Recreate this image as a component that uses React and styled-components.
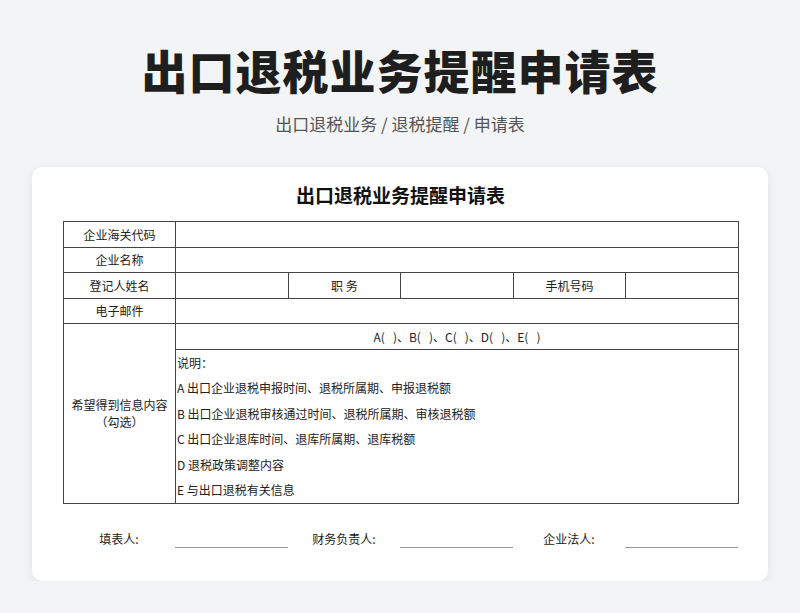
import React from "react";
import styled, { createGlobalStyle } from "styled-components";

const G = createGlobalStyle`
  body{margin:0;background:#f3f4f6;font-family:"Noto Sans CJK SC","Noto Sans",sans-serif;color:#222;}
`;
const Page = styled.div`display:flex;flex-direction:column;align-items:center;padding-top:38px;`;
const H1 = styled.h1`margin:0;font-size:46px;line-height:62px;font-weight:900;color:#1e1e1e;letter-spacing:1px;`;
const Sub = styled.div`margin-top:11px;font-size:17px;color:#555;line-height:26px;`;
const Card = styled.div`margin-top:30px;width:736px;height:414px;box-sizing:border-box;background:#fff;border-radius:10px;box-shadow:0 2px 8px rgba(0,0,0,.08);padding:14px 30px 0 31px;`;
const CT = styled.div`text-align:center;font-size:19px;font-weight:700;line-height:28px;color:#111;`;
const T = styled.table`margin-top:12px;width:676px;border-collapse:collapse;table-layout:fixed;font-size:12px;
  td{border:1px solid #444;padding:0;height:24.5px;text-align:center;}`;
const L = styled.td`&&{text-align:left;padding-left:1px;}`;
const Line = styled.div`height:25.5px;line-height:25.5px;`;
const Foot = styled.div`display:grid;grid-template-columns:112px 113px 112px 113px 112px 113px;margin-top:26px;font-size:12px;align-items:end;`;
const Lab = styled.div`text-align:center;line-height:18px;`;
const U = styled.div`border-bottom:1px solid #999;height:14px;`;

export default function App(){
  return <><G/><Page>
    <H1>出口退税业务提醒申请表</H1>
    <Sub>出口退税业务 / 退税提醒 / 申请表</Sub>
    <Card>
      <CT>出口退税业务提醒申请表</CT>
      <T>
        <colgroup><col style={{width:112}}/><col/><col/><col/><col/><col/></colgroup>
        <tbody>
          <tr><td>企业海关代码</td><td colSpan={5}></td></tr>
          <tr><td>企业名称</td><td colSpan={5}></td></tr>
          <tr><td>登记人姓名</td><td></td><td>职 务</td><td></td><td>手机号码</td><td></td></tr>
          <tr><td>电子邮件</td><td colSpan={5}></td></tr>
          <tr><td rowSpan={2}>希望得到信息内容<br/>（勾选）</td><td colSpan={5}>A(&nbsp;&nbsp;&nbsp;)、B(&nbsp;&nbsp;&nbsp;)、C(&nbsp;&nbsp;&nbsp;)、D(&nbsp;&nbsp;&nbsp;)、E(&nbsp;&nbsp;&nbsp;)</td></tr>
          <tr><L colSpan={5}>
            <Line>说明：</Line>
            <Line>A 出口企业退税申报时间、退税所属期、申报退税额</Line>
            <Line>B 出口企业退税审核通过时间、退税所属期、审核退税额</Line>
            <Line>C 出口企业退库时间、退库所属期、退库税额</Line>
            <Line>D 退税政策调整内容</Line>
            <Line>E 与出口退税有关信息</Line>
          </L></tr>
        </tbody>
      </T>
      <Foot>
        <Lab>填表人:</Lab><U/><Lab>财务负责人:</Lab><U/><Lab>企业法人:</Lab><U/>
      </Foot>
    </Card>
  </Page></>;
}
